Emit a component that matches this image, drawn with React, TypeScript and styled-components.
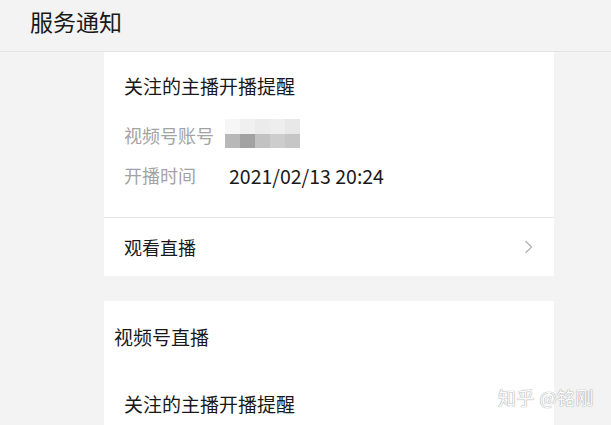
import React from 'react';
import styled, { createGlobalStyle } from 'styled-components';

const GlobalStyle = createGlobalStyle`
  html, body {
    margin: 0;
    padding: 0;
    background: #f3f3f3;
    font-family: "Noto Sans CJK SC", "Noto Sans", sans-serif;
    color: #191919;
    overflow: hidden;
  }
`;

const Page = styled.div`
  position: relative;
  width: 611px;
  height: 425px;
  overflow: hidden;
  background: #f3f3f3;
`;

const Header = styled.header`
  height: 52px;
  box-sizing: border-box;
  padding: 2px 0 12px 30px;
  display: flex;
  align-items: center;
  border-bottom: 1px solid #e2e2e2;
  font-size: 23px;
  line-height: 30px;
`;

const Body = styled.div`
  display: flex;
  flex-direction: column;
  gap: 25px;
  padding-left: 104px;
`;

const Card = styled.section`
  width: 450px;
  background: #fff;
  display: flex;
  flex-direction: column;
`;

const Content = styled.div`
  padding: 14px 20px 22px;
`;

const Title = styled.div<{ $indent?: number; $gap?: number }>`
  font-size: 19px;
  line-height: 40px;
  margin-left: ${({ $indent }) => $indent ?? 0}px;
  margin-top: ${({ $gap }) => $gap ?? 0}px;
`;

const Row = styled.div<{ $gap?: number }>`
  display: flex;
  align-items: center;
  height: 40px;
  margin-top: ${({ $gap }) => $gap ?? 0}px;
  font-size: 18px;
`;

const Label = styled.span`
  width: 105px;
  color: #a3a3a3;
  flex-shrink: 0;
`;

const Value = styled.span`
  color: #191919;
  font-size: 19.5px;
`;

const Blur = styled.div`
  display: grid;
  grid-template-columns: repeat(5, 15px);
  grid-template-rows: 15px 14px;
  margin-left: -4px;
  margin-top: -4px;
`;

const Cell = styled.span<{ $c: string }>`
  background: ${({ $c }) => $c};
`;

const Action = styled.div`
  height: 58px;
  border-top: 1px solid #e6e6e6;
  display: flex;
  align-items: center;
  justify-content: space-between;
  padding: 0 20px 0 20px;
  font-size: 18px;
`;

const Section = styled.div`
  padding: 16px 10px 0;
  min-height: 140px;
`;

const Watermark = styled.div`
  position: absolute;
  left: 498px;
  top: 384px;
  font-size: 18px;
  line-height: 26px;
  color: #fbfbfb;
  letter-spacing: 0.5px;
  text-shadow: 0 0 1px #9a9a9a, 0 0 1px #b0b0b0;
`;

const blurCells = [
  '#f6f6f6', '#f0f0f0', '#ebebeb', '#eeeeee', '#e8e8e8',
  '#b8b8b8', '#a2a2a2', '#c2c2c2', '#cdcdcd', '#c6c6c6',
];

const Chevron = () => (
  <svg width="10" height="14" viewBox="0 0 10 14" fill="none">
    <path d="M2 1.5 L7.5 7 L2 12.5" stroke="#b4b4b4" strokeWidth="1.4" strokeLinecap="round" strokeLinejoin="round" />
  </svg>
);

export default function App() {
  return (
    <Page>
      <GlobalStyle />
      <Header>服务通知</Header>
      <Body>
        <Card>
          <Content>
            <Title>关注的主播开播提醒</Title>
            <Row $gap={9}>
              <Label>视频号账号</Label>
              <Blur>
                {blurCells.map((c, i) => (
                  <Cell key={i} $c={c} />
                ))}
              </Blur>
            </Row>
            <Row>
              <Label>开播时间</Label>
              <Value>2021/02/13 20:24</Value>
            </Row>
          </Content>
          <Action>
            <span>观看直播</span>
            <Chevron />
          </Action>
        </Card>
        <Card>
          <Section>
            <Title>视频号直播</Title>
            <Title $indent={10} $gap={27}>关注的主播开播提醒</Title>
          </Section>
        </Card>
      </Body>
      <Watermark>知乎 @铭刚</Watermark>
    </Page>
  );
}
